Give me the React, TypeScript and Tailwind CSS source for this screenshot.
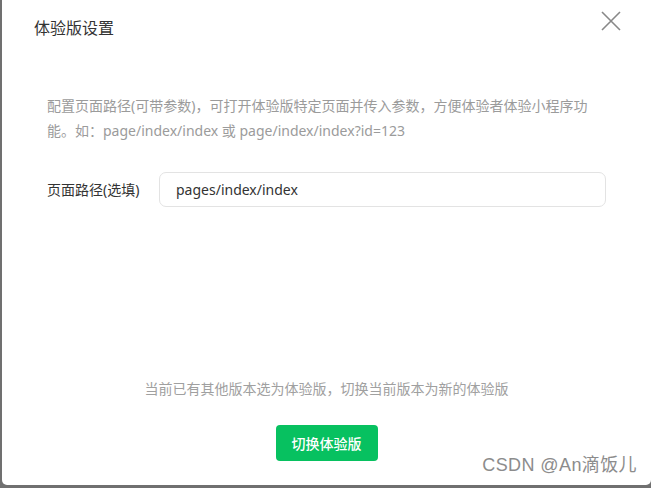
// Experience version settings dialog
export default function App() {
    const cjk = { fontFamily: '"Noto Sans", "Noto Sans CJK SC", sans-serif' };

    return (
        <div className="w-[651px] h-[488px] bg-[#707070] pl-[2px] pb-[3px] overflow-hidden" style={cjk}>
            <div className="relative h-full bg-white rounded-b-[5px] flex flex-col">
                {/* Header */}
                <div className="flex items-start justify-between pl-[32px] pt-[17px] pr-[30px]">
                    <h1 className="text-[16px] leading-[22px] text-[#333]">体验版设置</h1>
                    <button className="mt-[-6px] text-[#888]" aria-label="close">
                        <svg width="20" height="20" viewBox="0 0 20 20">
                            <path d="M1 1 L19 19 M19 1 L1 19" stroke="currentColor" strokeWidth="1.6" fill="none" />
                        </svg>
                    </button>
                </div>

                {/* Description */}
                <p className="mt-[54px] ml-[45px] mr-[45px] text-[14px] leading-[25px] text-[#9b9b9b]">
                    配置页面路径(可带参数)，可打开体验版特定页面并传入参数，方便体验者体验小程序功能。如：page/index/index 或 page/index/index?id=123
                </p>

                {/* Path field */}
                <div className="mt-[29px] ml-[45px] mr-[45px] flex items-center">
                    <label className="w-[112px] shrink-0 text-[14px] text-[#333]">页面路径(选填)</label>
                    <div className="flex-1 h-[35px] border border-[#e3e3e3] rounded-[7px] flex items-center px-[16px] text-[14px] text-[#333]">
                        pages/index/index
                    </div>
                </div>

                {/* Footer */}
                <div className="mt-auto pb-[24px] flex flex-col items-center">
                    <p className="text-[14px] leading-[20px] text-[#a0a0a0]">当前已有其他版本选为体验版，切换当前版本为新的体验版</p>
                    <button className="mt-[26px] w-[102px] h-[36px] rounded-[4px] bg-[#07c160] text-white text-[14px] font-medium">
                        切换体验版
                    </button>
                </div>

                {/* Watermark */}
                <span
                    className="absolute right-[14px] bottom-[8px] text-[18px] leading-[24px] tracking-[0.4px] text-[#8c8c8c] [text-shadow:0_0_2px_#fff]"
                    style={{ fontFamily: '"Liberation Sans", "Noto Sans CJK SC", sans-serif' }}
                >
                    CSDN @An滴饭儿
                </span>
            </div>
        </div>
    );
}
